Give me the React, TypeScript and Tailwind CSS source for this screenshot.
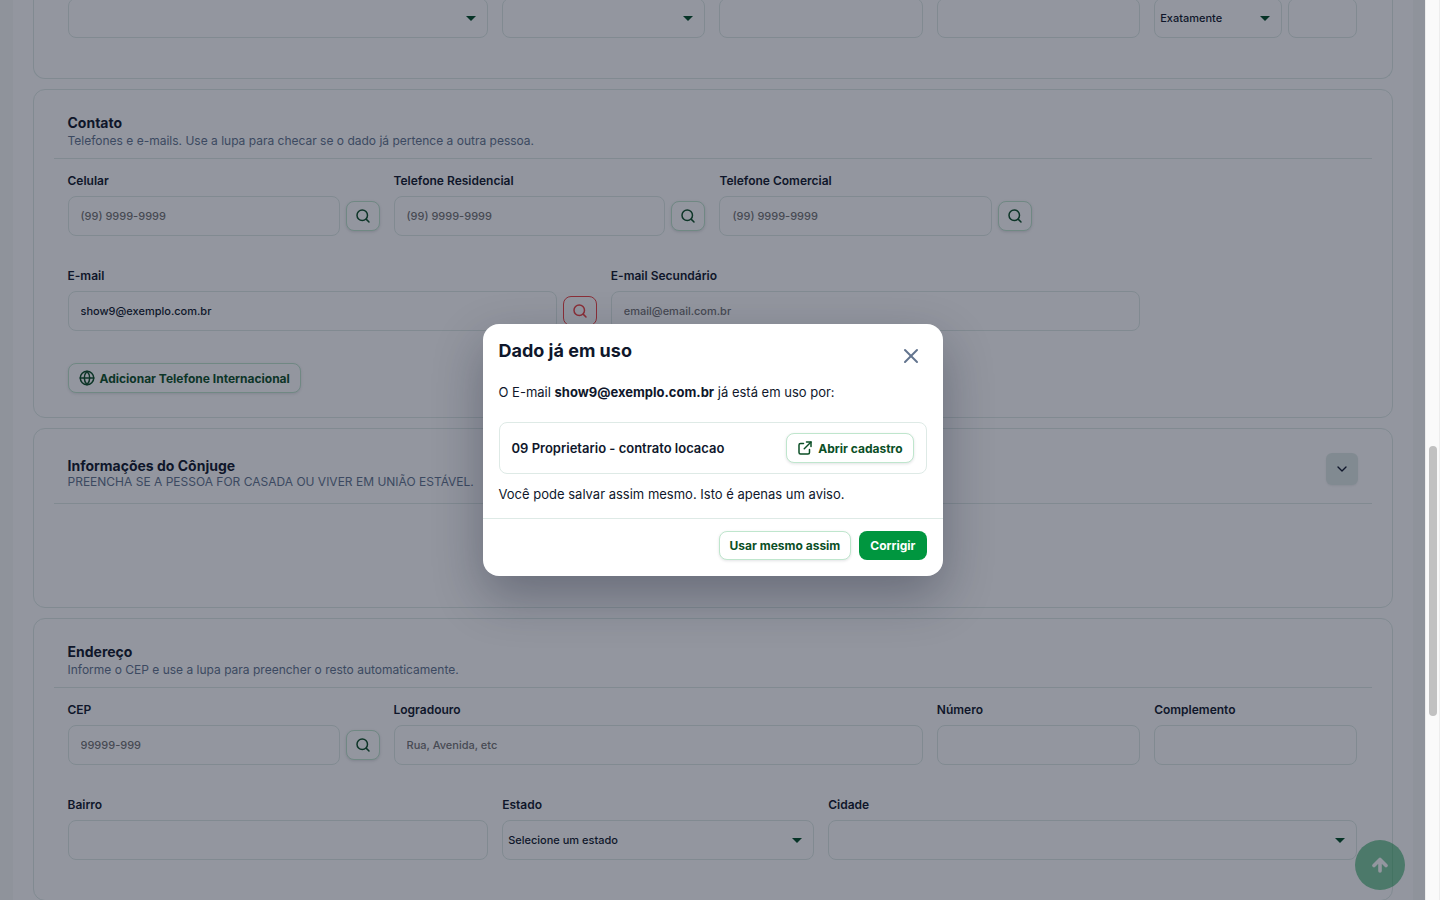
import { useState, type ReactNode } from "react";
import { ChevronDown, X } from "lucide-react";

const control =
  "h-10 w-full min-w-0 rounded-lg border border-[#deeae6] bg-white text-[11px] font-medium text-slate-900";

const outlineButton =
  "flex items-center rounded-lg border border-[#bfe6cd] bg-white text-xs font-bold leading-[17px] text-[#0b4f26] shadow-[0_1px_3px_rgba(15,23,42,0.12)]";

function Icon({ children }: { children: ReactNode }) {
  return (
    <svg
      aria-hidden="true"
      className="size-[18px] shrink-0"
      fill="none"
      stroke="currentColor"
      strokeLinecap="round"
      strokeLinejoin="round"
      strokeWidth="2"
      viewBox="0 0 24 24"
    >
      {children}
    </svg>
  );
}

interface FieldProps {
  id: string;
  label: string;
  className: string;
  children: ReactNode;
}

function Field({ id, label, className, children }: FieldProps) {
  return (
    <div className={className}>
      <label
        className="mb-1.5 block text-xs font-semibold leading-[18px] text-slate-900"
        htmlFor={id}
      >
        {label}
      </label>
      <div className="flex items-center gap-1.5">{children}</div>
    </div>
  );
}

interface TextInputProps {
  id?: string;
  label?: string;
  placeholder?: string;
  value?: string;
}

function TextInput({ id, label, placeholder, value }: TextInputProps) {
  return (
    <input
      aria-label={label}
      className={`${control} px-3 placeholder:text-[#757575]`}
      defaultValue={value}
      id={id}
      placeholder={placeholder}
      type="text"
    />
  );
}

interface SelectInputProps {
  id?: string;
  label?: string;
  option?: string;
}

function SelectInput({ id, label, option = "" }: SelectInputProps) {
  return (
    <div className="relative w-full">
      <select
        aria-label={label}
        className={`${control} block appearance-none pl-[5px] pr-7`}
        id={id}
      >
        <option>{option}</option>
      </select>
      <svg
        aria-hidden="true"
        className="pointer-events-none absolute right-3 top-[18px] h-[5px] w-2.5"
        viewBox="0 0 10 5"
      >
        <path d="M0 0h10L5 5z" fill="#004d26" />
      </svg>
    </div>
  );
}

function SearchButton({ label, danger }: { label: string; danger?: boolean }) {
  return (
    <button
      aria-label={label}
      className={`flex h-[30px] w-[34px] shrink-0 items-center justify-center rounded-lg border bg-white ${
        danger
          ? "border-[#ef4444] text-[#ef4444]"
          : "border-[#bfe6cd] text-[#0b4f26] shadow-[0_1px_3px_rgba(15,23,42,0.15)]"
      }`}
      type="button"
    >
      <Icon>
        <circle cx="11" cy="11" r="7" />
        <path d="m20 20-3.5-3.5" />
      </Icon>
    </button>
  );
}

function Section({
  title,
  description,
  children,
}: {
  title: string;
  description: string;
  children: ReactNode;
}) {
  return (
    <section className="rounded-xl border border-[#deeae6] bg-white px-5 pt-5">
      <header className="border-b border-[#deeae6] px-3.5 pb-2 pt-1">
        <h2 className="text-sm font-bold leading-[18px] text-slate-900">
          {title}
        </h2>
        <p className="text-xs leading-[18px] text-slate-500">{description}</p>
      </header>
      {children}
    </section>
  );
}

function PersonForm() {
  return (
    <main className="mx-auto flex max-w-[1400px] flex-col gap-2.5 bg-white px-5">
      {/* Bottom of the previous section, still partly scrolled into view */}
      <section className="-mt-0.5 rounded-b-xl border-x border-b border-[#deeae6] bg-white px-5 pb-10">
        <div className="grid grid-cols-12 gap-x-3.5 px-3.5">
          <div className="col-span-4">
            <SelectInput label="Profissão" />
          </div>
          <div className="col-span-2">
            <SelectInput label="Escolaridade" />
          </div>
          <div className="col-span-2">
            <TextInput label="Empresa" />
          </div>
          <div className="col-span-2">
            <TextInput label="Cargo" />
          </div>
          <div className="col-span-2 flex gap-1.5">
            <div className="w-32 shrink-0">
              <SelectInput label="Renda" option="Exatamente" />
            </div>
            <TextInput label="Valor da renda" />
          </div>
        </div>
      </section>

      <Section
        description="Telefones e e-mails. Use a lupa para checar se o dado já pertence a outra pessoa."
        title="Contato"
      >
        <div className="px-3.5 pb-6 pt-[13px]">
          <div className="grid grid-cols-12 gap-x-3.5 gap-y-[31px]">
            <Field className="col-span-3" id="celular" label="Celular">
              <TextInput id="celular" placeholder="(99) 9999-9999" />
              <SearchButton label="Checar celular" />
            </Field>
            <Field
              className="col-span-3"
              id="residencial"
              label="Telefone Residencial"
            >
              <TextInput id="residencial" placeholder="(99) 9999-9999" />
              <SearchButton label="Checar telefone residencial" />
            </Field>
            <Field
              className="col-span-3"
              id="comercial"
              label="Telefone Comercial"
            >
              <TextInput id="comercial" placeholder="(99) 9999-9999" />
              <SearchButton label="Checar telefone comercial" />
            </Field>
            <Field
              className="col-span-5 col-start-1"
              id="email"
              label="E-mail"
            >
              <TextInput id="email" value="show9@exemplo.com.br" />
              <SearchButton danger label="Checar e-mail" />
            </Field>
            <Field
              className="col-span-5"
              id="email-secundario"
              label="E-mail Secundário"
            >
              <TextInput
                id="email-secundario"
                placeholder="email@email.com.br"
              />
            </Field>
          </div>
          <button
            className={`${outlineButton} mt-8 h-[30px] gap-1 pl-[9px] pr-2.5`}
            type="button"
          >
            <Icon>
              <circle cx="12" cy="12" r="9" />
              <path d="M3 12h18" />
              <path d="M12 3a13 13 0 0 1 0 18a13 13 0 0 1 0-18z" />
            </Icon>
            Adicionar Telefone Internacional
          </button>
        </div>
      </Section>

      <section className="rounded-xl border border-[#deeae6] bg-white px-5 pb-[103px] pt-5">
        <header className="flex items-start justify-between border-b border-[#deeae6] px-3.5 pb-2 pt-1">
          <div className="py-[5px]">
            <h2 className="text-sm font-bold leading-4 text-slate-900">
              Informações do Cônjuge
            </h2>
            <p className="text-xs uppercase leading-4 text-slate-500">
              Preencha se a pessoa for casada ou viver em união estável.
            </p>
          </div>
          <button
            aria-label="Expandir informações do cônjuge"
            className="flex size-8 items-center justify-center rounded-md bg-[#deeae6] text-slate-900 shadow-[0_1px_2px_rgba(15,23,42,0.08)]"
            type="button"
          >
            <ChevronDown size={16} />
          </button>
        </header>
      </section>

      <Section
        description="Informe o CEP e use a lupa para preencher o resto automaticamente."
        title="Endereço"
      >
        <div className="grid grid-cols-12 gap-x-3.5 gap-y-[31px] px-3.5 pb-10 pt-[13px]">
          <Field className="col-span-3" id="cep" label="CEP">
            <TextInput id="cep" placeholder="99999-999" />
            <SearchButton label="Buscar CEP" />
          </Field>
          <Field className="col-span-5" id="logradouro" label="Logradouro">
            <TextInput id="logradouro" placeholder="Rua, Avenida, etc" />
          </Field>
          <Field className="col-span-2" id="numero" label="Número">
            <TextInput id="numero" />
          </Field>
          <Field className="col-span-2" id="complemento" label="Complemento">
            <TextInput id="complemento" />
          </Field>
          <Field className="col-span-4" id="bairro" label="Bairro">
            <TextInput id="bairro" />
          </Field>
          <Field className="col-span-3" id="estado" label="Estado">
            <SelectInput id="estado" option="Selecione um estado" />
          </Field>
          <Field className="col-span-5" id="cidade" label="Cidade">
            <SelectInput id="cidade" />
          </Field>
        </div>
      </Section>
    </main>
  );
}

function DuplicateDialog({ onClose }: { onClose: () => void }) {
  return (
    <div className="absolute inset-0 flex items-center justify-center bg-[rgba(15,23,42,0.45)]">
      <div
        aria-labelledby="duplicate-title"
        aria-modal="true"
        className="w-[460px] rounded-2xl bg-white text-slate-900 shadow-[0_20px_50px_rgba(15,23,42,0.32)]"
        role="dialog"
      >
        <div className="flex items-start justify-between px-4 pt-4">
          <h2 className="text-lg font-bold leading-[22px]" id="duplicate-title">
            Dado já em uso
          </h2>
          <button
            aria-label="Fechar"
            className="flex size-8 items-center justify-center text-slate-500"
            onClick={onClose}
            type="button"
          >
            <X size={24} />
          </button>
        </div>

        <div className="px-4 pb-3.5 pt-2.5 text-[13px] leading-5">
          <p>
            O E-mail <strong>show9@exemplo.com.br</strong> já está em uso por:
          </p>
          <div className="mb-2.5 mt-5 flex items-center justify-between rounded-lg border border-[#deeae6] px-3 py-2.5">
            <span className="font-semibold">
              09 Proprietario - contrato locacao
            </span>
            <button
              className={`${outlineButton} h-[30px] gap-1 pl-[9px] pr-2.5`}
              type="button"
            >
              <Icon>
                <path d="M14 4h6v6" />
                <path d="M20 4 11 13" />
                <path d="M18 14v4a2 2 0 0 1-2 2H6a2 2 0 0 1-2-2V8a2 2 0 0 1 2-2h4" />
              </Icon>
              Abrir cadastro
            </button>
          </div>
          <p>Você pode salvar assim mesmo. Isto é apenas um aviso.</p>
        </div>

        <div className="flex justify-end gap-2 border-t border-[#deeae6] px-4 pb-4 pt-3">
          <button
            className={`${outlineButton} h-[29px] px-2.5`}
            onClick={onClose}
            type="button"
          >
            Usar mesmo assim
          </button>
          <button
            className="h-[29px] rounded-lg bg-[#00963f] px-[11px] text-xs font-bold text-white"
            onClick={onClose}
            type="button"
          >
            Corrigir
          </button>
        </div>
      </div>
    </div>
  );
}

export default function App() {
  const [isOpen, setIsOpen] = useState(true);

  return (
    <div className="flex h-screen overflow-hidden font-['Inter',sans-serif]">
      <div className="relative min-w-0 flex-1 overflow-hidden bg-[#f7faf8]">
        <PersonForm />
        <button
          aria-label="Voltar ao topo"
          className="absolute bottom-2.5 right-5 flex size-[50px] items-center justify-center rounded-full bg-[#00963f] text-white opacity-50"
          type="button"
        >
          <svg
            aria-hidden="true"
            className="size-4"
            fill="none"
            stroke="currentColor"
            strokeLinecap="round"
            strokeLinejoin="round"
            strokeWidth="3.6"
            viewBox="0 0 16 16"
          >
            <path d="M8 14V2.5M2 8.5l6-6 6 6" />
          </svg>
        </button>
        {isOpen && <DuplicateDialog onClose={() => setIsOpen(false)} />}
      </div>

      {/* Scroll track */}
      <div
        aria-hidden="true"
        className="flex w-[15px] shrink-0 flex-col items-center border-x border-[#ededed] bg-[#fafafa]"
      >
        <div className="h-[446px] shrink-0" />
        <div className="h-[270px] w-2 shrink-0 rounded-full bg-[#c1c1c1]" />
      </div>
    </div>
  );
}
